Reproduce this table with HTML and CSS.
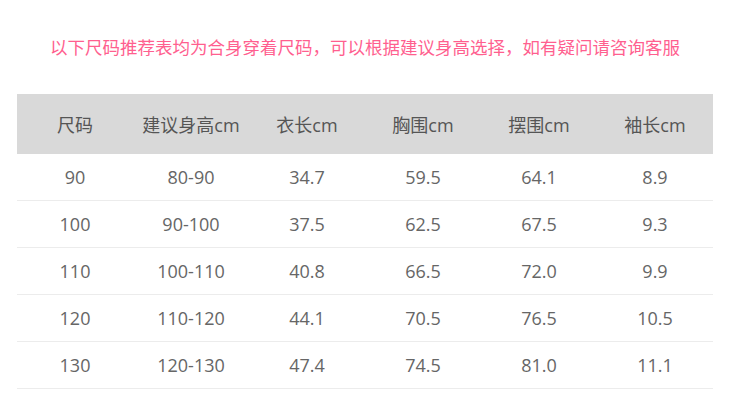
FILE: index.html
```html
<!DOCTYPE html>
<html lang="zh">
<head>
<meta charset="utf-8">
<link rel="stylesheet" href="styles.css">
</head>
<body>
<div class="page">
  <p class="notice">以下尺码推荐表均为合身穿着尺码，可以根据建议身高选择，如有疑问请咨询客服</p>
  <table class="size-table">
    <thead>
      <tr><th>尺码</th><th>建议身高cm</th><th>衣长cm</th><th>胸围cm</th><th>摆围cm</th><th>袖长cm</th></tr>
    </thead>
    <tbody>
      <tr><td>90</td><td>80-90</td><td>34.7</td><td>59.5</td><td>64.1</td><td>8.9</td></tr>
      <tr><td>100</td><td>90-100</td><td>37.5</td><td>62.5</td><td>67.5</td><td>9.3</td></tr>
      <tr><td>110</td><td>100-110</td><td>40.8</td><td>66.5</td><td>72.0</td><td>9.9</td></tr>
      <tr><td>120</td><td>110-120</td><td>44.1</td><td>70.5</td><td>76.5</td><td>10.5</td></tr>
      <tr><td>130</td><td>120-130</td><td>47.4</td><td>74.5</td><td>81.0</td><td>11.1</td></tr>
    </tbody>
  </table>
</div>
</body>
</html>
```
FILE: styles.css
```css
html, body {
  margin: 0;
  padding: 0;
  background: #ffffff;
}
.page {
  width: 730px;
  padding-top: 34px;
  font-family: "Open Sans", "Noto Sans CJK SC", sans-serif;
}
.notice {
  margin: 0;
  text-align: center;
  color: #ff5f8f;
  font-size: 17.5px;
  line-height: 26px;
}
.size-table {
  margin: 34px auto 0;
  width: 696px;
  border-collapse: collapse;
  table-layout: fixed;
}
.size-table th {
  background: #d9d9d9;
  color: #555555;
  font-weight: normal;
  font-size: 18px;
  height: 60px;
  padding: 0;
  text-align: center;
}
.size-table td {
  color: #666666;
  font-size: 18px;
  height: 46px;
  padding: 0;
  text-align: center;
  border-bottom: 1px solid #ececec;
}
```
